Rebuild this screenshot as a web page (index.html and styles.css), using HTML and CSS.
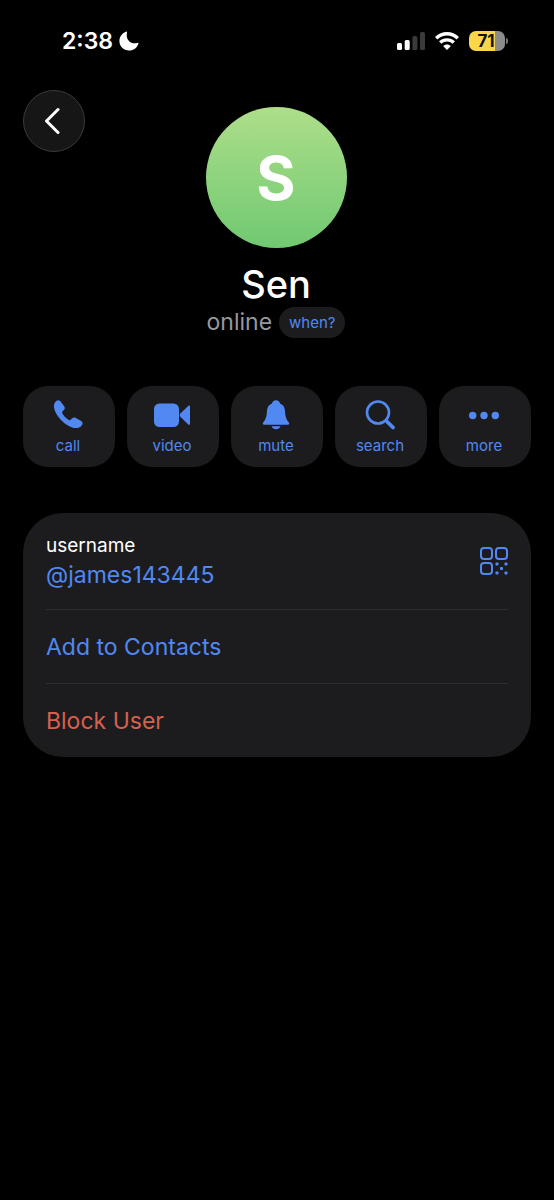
FILE: index.html
```html
<!DOCTYPE html>
<html lang="en">
<head>
<meta charset="utf-8">
<meta name="viewport" content="width=device-width, initial-scale=1">
<title>Sen</title>
<link rel="stylesheet" href="styles.css">
</head>
<body>
<div class="status">
  <div class="status-time">
    <span>2:38</span>
    <svg width="20" height="20" viewBox="0 0 20 20" fill="#fff"><path d="M8 1.200C7.200 5 8 8.200 10.200 10.300c2.200 2.100 5.300 2.600 8.600 1.500.5-.2.900.2.700.7C18 16.900 14.500 19.600 10.200 19.600 4.600 19.600.4 15.500.4 10.100.4 5.700 3.200 2 7.400.6c.4-.1.700.1.600.6z"/></svg>
  </div>
  <div class="status-icons">
    <svg width="28" height="18" viewBox="0 0 28 18"><g fill="#fff"><rect x="0" y="11" width="5" height="7" rx="1.500"/><rect x="7.700" y="8" width="5" height="10" rx="1.500"/></g><g fill="#3a3a3a"><rect x="15.400" y="4" width="5" height="14" rx="1.500"/><rect x="23" y="0" width="5" height="18" rx="1.500"/></g></svg>
    <svg width="24" height="18" viewBox="0 0 24 18"><g fill="none" stroke="#fff" stroke-width="3.400"><path d="M1.200 6.200C7.400.2 16.600.2 22.800 6.200"/><path d="M5.200 10.600C9.100 6.900 14.900 6.900 18.800 10.600"/></g><path d="M12 18 8.100 14.100C10.200 11.900 13.800 11.900 15.900 14.100z" fill="#fff"/></svg>
    <div class="battery"><span class="battery-level">71</span></div>
  </div>
</div>

<header class="profile">
  <button class="back" aria-label="Back">
    <svg width="16" height="28" viewBox="0 0 16 28" fill="none" stroke="#fff" stroke-width="3" stroke-linecap="round" stroke-linejoin="round"><path d="M14 2.500 2.500 14 14 25.500"/></svg>
  </button>
  <div class="identity">
    <div class="avatar">S</div>
    <h1 class="name">Sen</h1>
    <div class="presence"><span>online</span><button class="when">when?</button></div>
  </div>
</header>

<nav class="actions">
  <button class="action">
    <svg width="36" height="32" viewBox="0 0 36 32" fill="currentColor"><path d="M9.200 1.500C6.800.4 4 3.700 3.900 7.300c-.1 4.200 3.800 10.600 8.700 15.200 4.200 4 9.300 6.600 13.700 6.600 3.200 0 6-2.200 6.200-4.700 0-1-.4-1.700-1.300-2.300l-5.300-3.200c-1.500-.8-2.700-.5-4 .7l-1.200 1.100c-.9.700-1.600.6-2.600-.1-2.200-1.600-4.300-3.800-5.600-5.900-.6-1-.6-1.700.2-2.500l1.100-1.100c1.200-1.200 1.300-2.300.5-3.700L10.800 2.800c-.4-.6-.9-1.100-1.600-1.300z"/></svg>
    <span>call</span>
  </button>
  <button class="action">
    <svg width="36" height="32" viewBox="0 0 36 32" fill="currentColor"><rect x="0" y="4.500" width="25" height="23.500" rx="5.500"/><path d="M26.400 14.600 34.200 6.900c.9-.8 1.800-.4 1.800.7v17.200c0 1.100-.9 1.500-1.800.7l-7.800-7.700c-.9-.9-.9-2.300 0-3.200z"/></svg>
    <span>video</span>
  </button>
  <button class="action">
    <svg width="36" height="32" viewBox="0 0 36 32" fill="currentColor"><path d="M18 1.200c-2.200 0-3.700 1.300-4.100 3.200C10.700 5.700 9.200 8.200 9 12c-.2 5-1 8.200-3.700 11.200-1 1.200-.5 2.500 1 2.500h23.400c1.500 0 2-1.300 1-2.500C28 20.200 27.200 17 27 12c-.2-3.800-1.700-6.300-4.900-7.600-.4-1.900-1.900-3.200-4.100-3.200z"/><path d="M13.500 27.200h9c-.8 1.900-2.400 3-4.500 3s-3.700-1.100-4.500-3z"/></svg>
    <span>mute</span>
  </button>
  <button class="action">
    <svg width="36" height="32" viewBox="0 0 36 32" fill="none" stroke="currentColor" stroke-linecap="round"><circle cx="16" cy="13.500" r="11" stroke-width="2.600"/><path d="M24 21.500l1.500 1.500" stroke-width="2.800"/><path d="M25.500 23l5.500 5.500" stroke-width="3.800"/></svg>
    <span>search</span>
  </button>
  <button class="action">
    <svg width="36" height="32" viewBox="0 0 36 32" fill="currentColor"><circle cx="6.700" cy="16.500" r="3.700"/><circle cx="18" cy="16.500" r="3.700"/><circle cx="29.300" cy="16.500" r="3.700"/></svg>
    <span>more</span>
  </button>
</nav>

<main class="card">
  <div class="row row-username">
    <div>
      <div class="label">username</div>
      <a class="handle" href="#">@james143445</a>
    </div>
    <button class="qr" aria-label="QR code">
      <svg width="28" height="28" viewBox="0 0 28 28"><g fill="none" stroke="currentColor" stroke-width="2"><rect x="1" y="1" width="11" height="11" rx="3"/><rect x="16" y="1" width="11" height="11" rx="3"/><rect x="1" y="16" width="11" height="11" rx="3"/></g><g fill="currentColor"><rect x="15.500" y="15.500" width="3" height="3" rx=".8"/><rect x="24.500" y="15.500" width="3" height="3" rx=".8"/><rect x="20" y="20" width="3" height="3" rx=".8"/><rect x="15.500" y="24.500" width="3" height="3" rx=".8"/><rect x="24.500" y="24.500" width="3" height="3" rx=".8"/></g></svg>
    </button>
  </div>
  <button class="row">Add to Contacts</button>
  <button class="row row-danger">Block User</button>
</main>
</body>
</html>
```
FILE: styles.css
```css
* {
  box-sizing: border-box;
}

body {
  margin: 0;
  padding: 0 23px;
  min-height: 100vh;
  background: #000;
  color: #fff;
  font-family: Inter, "Liberation Sans", sans-serif;
}

button {
  margin: 0;
  padding: 0;
  border: 0;
  background: none;
  color: inherit;
  font: inherit;
  cursor: pointer;
}

svg {
  display: block;
}

.status {
  display: flex;
  align-items: center;
  justify-content: space-between;
  height: 82px;
  padding: 0 26px 0 39px;
}

.status-time {
  display: flex;
  align-items: center;
  gap: 6px;
  font-size: 23px;
  font-weight: 600;
}

.status-icons {
  display: flex;
  align-items: center;
  gap: 10px;
}

.battery {
  position: relative;
  width: 36px;
  height: 20px;
  padding-right: 2px;
  border-radius: 7px;
  background: linear-gradient(90deg, #fbd649 71%, #8b8b8b 71%);
  color: #111;
  text-align: center;
}

.battery::after {
  content: "";
  position: absolute;
  top: 7px;
  right: -3px;
  width: 2px;
  height: 6px;
  border-radius: 0 2px 2px 0;
  background: #777;
}

.battery-level {
  font-size: 17px;
  font-weight: 700;
  line-height: 20px;
}

.profile {
  display: grid;
  grid-template-columns: 62px 1fr 62px;
  padding-top: 8px;
}

.back {
  display: flex;
  align-items: center;
  justify-content: center;
  width: 62px;
  height: 62px;
  padding-right: 4px;
  border: 1px solid #3a3a3a;
  border-radius: 50%;
  background: #161616;
}

.identity {
  display: flex;
  flex-direction: column;
  align-items: center;
  padding: 17px 2px 0 0;
}

.avatar {
  display: flex;
  align-items: center;
  justify-content: center;
  width: 141px;
  height: 141px;
  border-radius: 50%;
  background: linear-gradient(#aede8a, #70c971);
  font-size: 60px;
  font-weight: 700;
}

.name {
  margin: 14px 0 0;
  font-size: 38px;
  font-weight: 500;
  line-height: 45px;
}

.presence {
  display: flex;
  align-items: center;
  gap: 7px;
  color: #98989e;
  font-size: 23px;
  line-height: 31px;
}

.when {
  height: 31px;
  padding: 0 10px;
  border-radius: 16px;
  background: #1c1c1e;
  color: #5288f1;
  font-size: 15px;
}

.actions {
  display: grid;
  grid-template-columns: repeat(5, 1fr);
  gap: 12px;
  margin-top: 48px;
}

.action {
  display: flex;
  flex-direction: column;
  align-items: center;
  gap: 5px;
  height: 81px;
  padding: 13px 2px 0 0;
  border-radius: 25px;
  background: #1c1c1e;
  color: #5288f1;
  font-size: 15px;
  line-height: 20px;
}

.card {
  display: flex;
  flex-direction: column;
  margin-top: 46px;
  padding: 0 23px;
  border-radius: 40px;
  background: #1c1c1e;
}

.row {
  display: flex;
  align-items: center;
  min-height: 74px;
  border-top: 1px solid #2e2e30;
  color: #5288f1;
  font-size: 23px;
  text-align: left;
}

.row-username {
  justify-content: space-between;
  min-height: 96px;
  border-top: 0;
}

.row-danger {
  color: #d7604f;
}

.label {
  color: #fff;
  font-size: 19px;
  line-height: 28px;
}

.handle {
  color: inherit;
  line-height: 31px;
  text-decoration: none;
}

.qr {
  color: #5288f1;
}
```
